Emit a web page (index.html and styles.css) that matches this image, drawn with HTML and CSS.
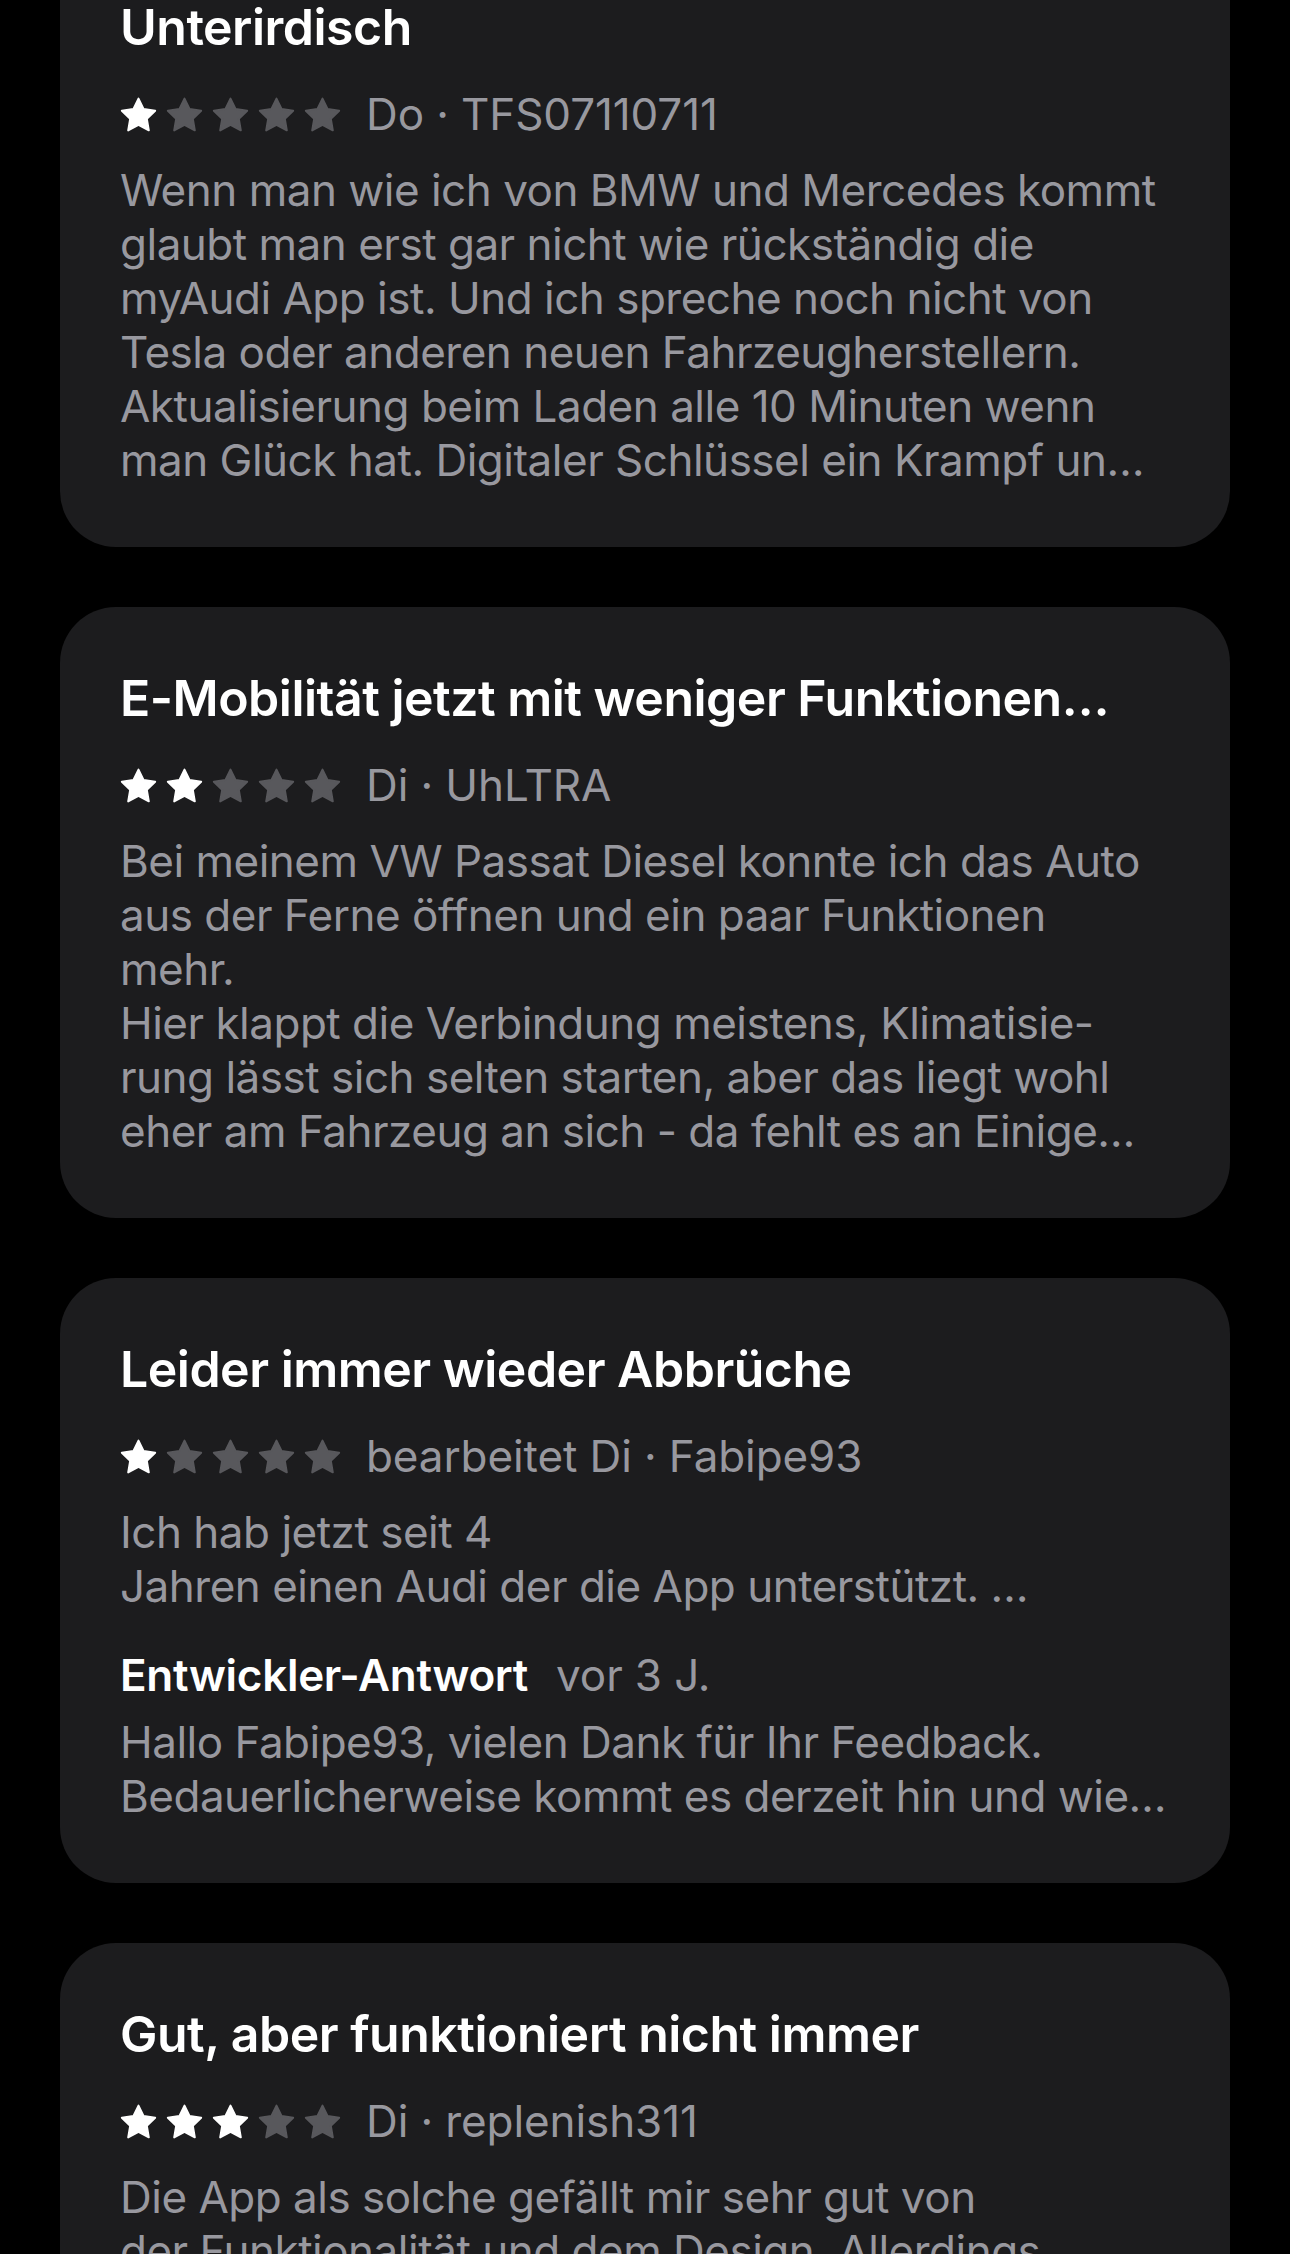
FILE: index.html
```html
<!DOCTYPE html>
<html lang="de">
<head>
<meta charset="utf-8">
<title>Bewertungen</title>
<link rel="stylesheet" href="styles.css">
</head>
<body>
<svg class="defs" width="0" height="0" aria-hidden="true">
  <defs>
    <path id="star" d="M12 2l3.09 6.26L22 9.27l-5 4.87 1.18 6.88L12 17.77l-6.18 3.25L7 14.14 2 9.27l6.91-1.01L12 2z"/>
  </defs>
</svg>
<main class="list">

  <section class="card">
    <h2 class="title">Unterirdisch</h2>
    <div class="meta">
      <div class="stars">
        <svg class="star on" viewBox="1 1 22 21"><use href="#star"/></svg>
        <svg class="star" viewBox="1 1 22 21"><use href="#star"/></svg>
        <svg class="star" viewBox="1 1 22 21"><use href="#star"/></svg>
        <svg class="star" viewBox="1 1 22 21"><use href="#star"/></svg>
        <svg class="star" viewBox="1 1 22 21"><use href="#star"/></svg>
      </div>
      <span class="meta-text">Do · TFS07110711</span>
    </div>
    <p class="body">Wenn man wie ich von BMW und Mercedes kommt<br>glaubt man erst gar nicht wie rückständig die<br>myAudi App ist. Und ich spreche noch nicht von<br>Tesla oder anderen neuen Fahrzeugherstellern.<br>Aktualisierung beim Laden alle 10 Minuten wenn<br>man Glück hat. Digitaler Schlüssel ein Krampf un…</p>
  </section>

  <section class="card">
    <h2 class="title">E-Mobilität jetzt mit weniger Funktionen…</h2>
    <div class="meta">
      <div class="stars">
        <svg class="star on" viewBox="1 1 22 21"><use href="#star"/></svg>
        <svg class="star on" viewBox="1 1 22 21"><use href="#star"/></svg>
        <svg class="star" viewBox="1 1 22 21"><use href="#star"/></svg>
        <svg class="star" viewBox="1 1 22 21"><use href="#star"/></svg>
        <svg class="star" viewBox="1 1 22 21"><use href="#star"/></svg>
      </div>
      <span class="meta-text">Di · UhLTRA</span>
    </div>
    <p class="body">Bei meinem VW Passat Diesel konnte ich das Auto<br>aus der Ferne öffnen und ein paar Funktionen<br>mehr.<br>Hier klappt die Verbindung meistens, Klimatisie-<br>rung lässt sich selten starten, aber das liegt wohl<br>eher am Fahrzeug an sich - da fehlt es an Einige…</p>
  </section>

  <section class="card">
    <h2 class="title">Leider immer wieder Abbrüche</h2>
    <div class="meta">
      <div class="stars">
        <svg class="star on" viewBox="1 1 22 21"><use href="#star"/></svg>
        <svg class="star" viewBox="1 1 22 21"><use href="#star"/></svg>
        <svg class="star" viewBox="1 1 22 21"><use href="#star"/></svg>
        <svg class="star" viewBox="1 1 22 21"><use href="#star"/></svg>
        <svg class="star" viewBox="1 1 22 21"><use href="#star"/></svg>
      </div>
      <span class="meta-text">bearbeitet Di · Fabipe93</span>
    </div>
    <p class="body">Ich hab jetzt seit 4<br>Jahren einen Audi der die App unterstützt. …</p>
    <div class="reply-head">
      <span class="reply-title">Entwickler-Antwort</span>
      <span class="reply-date">vor 3 J.</span>
    </div>
    <p class="body reply-body">Hallo Fabipe93, vielen Dank für Ihr Feedback.<br>Bedauerlicherweise kommt es derzeit hin und wie…</p>
  </section>

  <section class="card">
    <h2 class="title">Gut, aber funktioniert nicht immer</h2>
    <div class="meta">
      <div class="stars">
        <svg class="star on" viewBox="1 1 22 21"><use href="#star"/></svg>
        <svg class="star on" viewBox="1 1 22 21"><use href="#star"/></svg>
        <svg class="star on" viewBox="1 1 22 21"><use href="#star"/></svg>
        <svg class="star" viewBox="1 1 22 21"><use href="#star"/></svg>
        <svg class="star" viewBox="1 1 22 21"><use href="#star"/></svg>
      </div>
      <span class="meta-text">Di · replenish311</span>
    </div>
    <p class="body">Die App als solche gefällt mir sehr gut von<br>der Funktionalität und dem Design. Allerdings<br>kommt es immer wieder zu Verbindungsabbrü…</p>
  </section>

</main>
</body>
</html>
```
FILE: styles.css
```css
html, body {
  margin: 0;
  padding: 0;
  background: #000;
}

body {
  height: 2254px;
  overflow: hidden;
  font-family: "Inter", "Roboto", "Liberation Sans", sans-serif;
  -webkit-font-smoothing: antialiased;
}

.defs {
  position: absolute;
  width: 0;
  height: 0;
}

.list {
  display: flex;
  flex-direction: column;
  gap: 60px;
  margin-top: -64px;
  padding: 0 60px;
}

.card {
  background: #1c1c1e;
  border-radius: 56px;
  padding: 61px 60px 60px;
}

.title {
  margin: 0;
  font-size: 50px;
  line-height: 60px;
  font-weight: 600;
  letter-spacing: -0.5px;
  color: #ffffff;
  white-space: nowrap;
}

.meta {
  display: flex;
  align-items: flex-start;
  height: 54px;
  margin-top: 30px;
}

.stars {
  display: flex;
  gap: 9px;
  margin-top: 10px;
  margin-right: 25px;
}

.star {
  display: block;
  width: 37px;
  height: 35px;
  fill: #58585c;
  stroke: #58585c;
  stroke-width: 1.2;
  stroke-linejoin: round;
}

.star.on {
  fill: #ffffff;
  stroke: #ffffff;
}

.meta-text {
  font-size: 44px;
  line-height: 54px;
  color: #98989f;
  letter-spacing: -0.1px;
  white-space: nowrap;
}

.body {
  margin: 22px 0 0;
  font-size: 44px;
  line-height: 54px;
  letter-spacing: -0.5px;
  color: #98989f;
  white-space: nowrap;
}

.reply-head {
  display: flex;
  align-items: baseline;
  gap: 28px;
  margin-top: 35px;
  line-height: 54px;
  font-size: 44px;
}

.reply-title {
  font-weight: 600;
  color: #ffffff;
  letter-spacing: -0.3px;
}

.reply-date {
  color: #98989f;
  letter-spacing: -0.1px;
}

.reply-body {
  margin-top: 13px;
}
```
